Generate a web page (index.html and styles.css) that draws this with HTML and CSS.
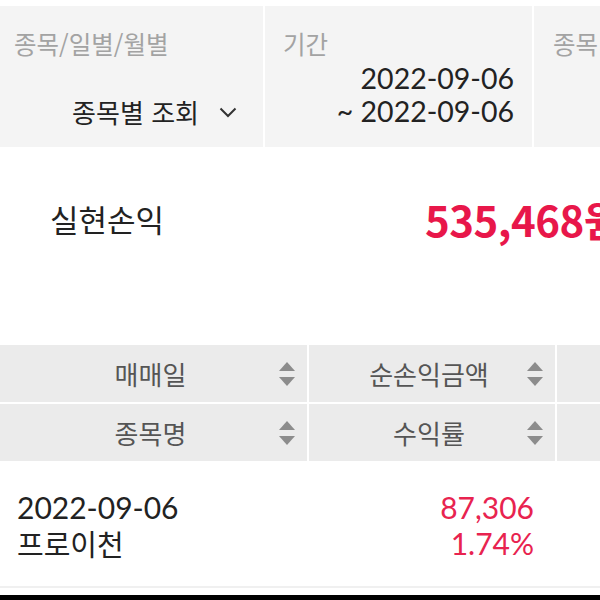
FILE: index.html
```html
<!DOCTYPE html>
<html lang="ko">
<head>
<meta charset="utf-8">
<link rel="stylesheet" href="styles.css">
</head>
<body>
<div class="screen">
  <div class="filter">
    <div class="fcell fcell-type">
      <div class="flabel">종목/일별/월별</div>
      <div class="fvalue select">종목별 조회
        <svg class="chev" width="18" height="11" viewBox="0 0 18 11"><path d="M1.5 1.5l7.5 7.5 7.5-7.5" fill="none" stroke="#333" stroke-width="2"/></svg>
      </div>
    </div>
    <div class="fcell fcell-period">
      <div class="flabel">기간</div>
      <div class="fdate">2022-09-06</div>
      <div class="fdate">~ 2022-09-06</div>
    </div>
    <div class="fcell fcell-stock">
      <div class="flabel">종목</div>
    </div>
  </div>

  <div class="summary">
    <div class="sum-label">실현손익</div>
    <div class="sum-value">535,468원</div>
  </div>

  <div class="thead">
    <div class="th"><span class="th-text">매매일</span><svg class="sort" width="16" height="26" viewBox="0 0 16 26"><polygon points="0,10 8,1 16,10"/><polygon points="0,16 16,16 8,25"/></svg></div>
    <div class="th"><span class="th-text">순손익금액</span><svg class="sort" width="16" height="26" viewBox="0 0 16 26"><polygon points="0,10 8,1 16,10"/><polygon points="0,16 16,16 8,25"/></svg></div>
    <div class="th th-extra"></div>
    <div class="th"><span class="th-text">종목명</span><svg class="sort" width="16" height="26" viewBox="0 0 16 26"><polygon points="0,10 8,1 16,10"/><polygon points="0,16 16,16 8,25"/></svg></div>
    <div class="th"><span class="th-text">수익률</span><svg class="sort" width="16" height="26" viewBox="0 0 16 26"><polygon points="0,10 8,1 16,10"/><polygon points="0,16 16,16 8,25"/></svg></div>
    <div class="th th-extra"></div>
  </div>

  <div class="trow">
    <div class="td td-left">
      <div class="line">2022-09-06</div>
      <div class="line kr">프로이천</div>
    </div>
    <div class="td td-right">
      <div class="line red">87,306</div>
      <div class="line red">1.74%</div>
    </div>
    <div class="td"></div>
  </div>

  <div class="bottom-line"></div>
  <div class="navbar"></div>
</div>
</body>
</html>
```

FILE: styles.css
```css
html, body {
  margin: 0;
  padding: 0;
  background: #fff;
}
body {
  width: 600px;
  height: 600px;
  overflow: hidden;
  font-family: "Noto Sans CJK KR", "Noto Sans", sans-serif;
  color: #222;
}
.screen {
  width: 600px;
  height: 600px;
  display: flex;
  flex-direction: column;
  overflow: hidden;
}

/* filter panel */
.filter {
  margin-top: 6px;
  height: 141px;
  display: grid;
  grid-template-columns: 263px 267px 200px;
  column-gap: 2px;
  background: #fff;
  flex: none;
}
.fcell {
  background: #f4f4f4;
  padding-top: 20px;
  display: flex;
  flex-direction: column;
}
.fcell-type { padding-left: 14px; padding-right: 26px; }
.fcell-period { padding-left: 18px; padding-right: 18px; }
.fcell-stock { padding-left: 19px; }
.flabel {
  font-size: 24.5px;
  line-height: 36px;
  height: 36px;
  color: #a3a3a3;
  white-space: nowrap;
}
.fvalue {
  margin-top: 33px;
  font-size: 26px;
  line-height: 33px;
  height: 33px;
  text-align: right;
  white-space: nowrap;
  color: #222;
}
.select {
  display: flex;
  justify-content: flex-end;
  align-items: center;
}
.chev {
  margin-left: 20px;
  margin-top: 2px;
}
.fdate {
  font-family: "Lato", "Noto Sans CJK KR", sans-serif;
  font-size: 28.5px;
  line-height: 33px;
  height: 33px;
  text-align: right;
  white-space: nowrap;
  color: #222;
}

/* summary */
.summary {
  height: 198px;
  flex: none;
  display: grid;
  grid-template-columns: 375px auto;
  padding-left: 50px;
  padding-top: 50px;
  box-sizing: border-box;
  align-items: center;
  align-content: start;
}
.sum-label {
  font-size: 31px;
  line-height: 44px;
  color: #222;
}
.sum-value {
  font-size: 42px;
  line-height: 44px;
  font-weight: 700;
  color: #e8174a;
  white-space: nowrap;
  letter-spacing: -0.5px;
}

/* table head */
.thead {
  flex: none;
  display: grid;
  grid-template-columns: 307px 246px 200px;
  grid-template-rows: 57px 57px;
  gap: 2px;
  background: #fff;
}
.th {
  background: #ebebeb;
  display: flex;
  align-items: center;
  padding-left: 22px;
  padding-right: 12px;
}
.th-text {
  flex: 1;
  text-align: center;
  font-size: 26px;
  color: #555;
  white-space: nowrap;
}
.sort {
  fill: #8c8c8c;
  flex: none;
}

/* data row */
.trow {
  flex: none;
  height: 125px;
  display: grid;
  grid-template-columns: 307px 246px 200px;
  column-gap: 2px;
  padding-top: 28px;
  box-sizing: border-box;
}
.td-left { padding-left: 17px; }
.td-right { padding-right: 21px; text-align: right; }
.line {
  font-family: "Lato", "Noto Sans CJK KR", sans-serif;
  font-size: 30px;
  line-height: 36px;
  height: 36px;
  color: #222;
  white-space: nowrap;
}
.line.kr {
  font-family: "Noto Sans CJK KR", sans-serif;
  font-size: 29px;
}
.red { color: #e8234f; }

.bottom-line {
  flex: none;
  height: 2px;
  background: #f0f0f0;
}
.navbar {
  flex: none;
  margin-top: 7px;
  height: 10px;
  background: #000;
}
```
